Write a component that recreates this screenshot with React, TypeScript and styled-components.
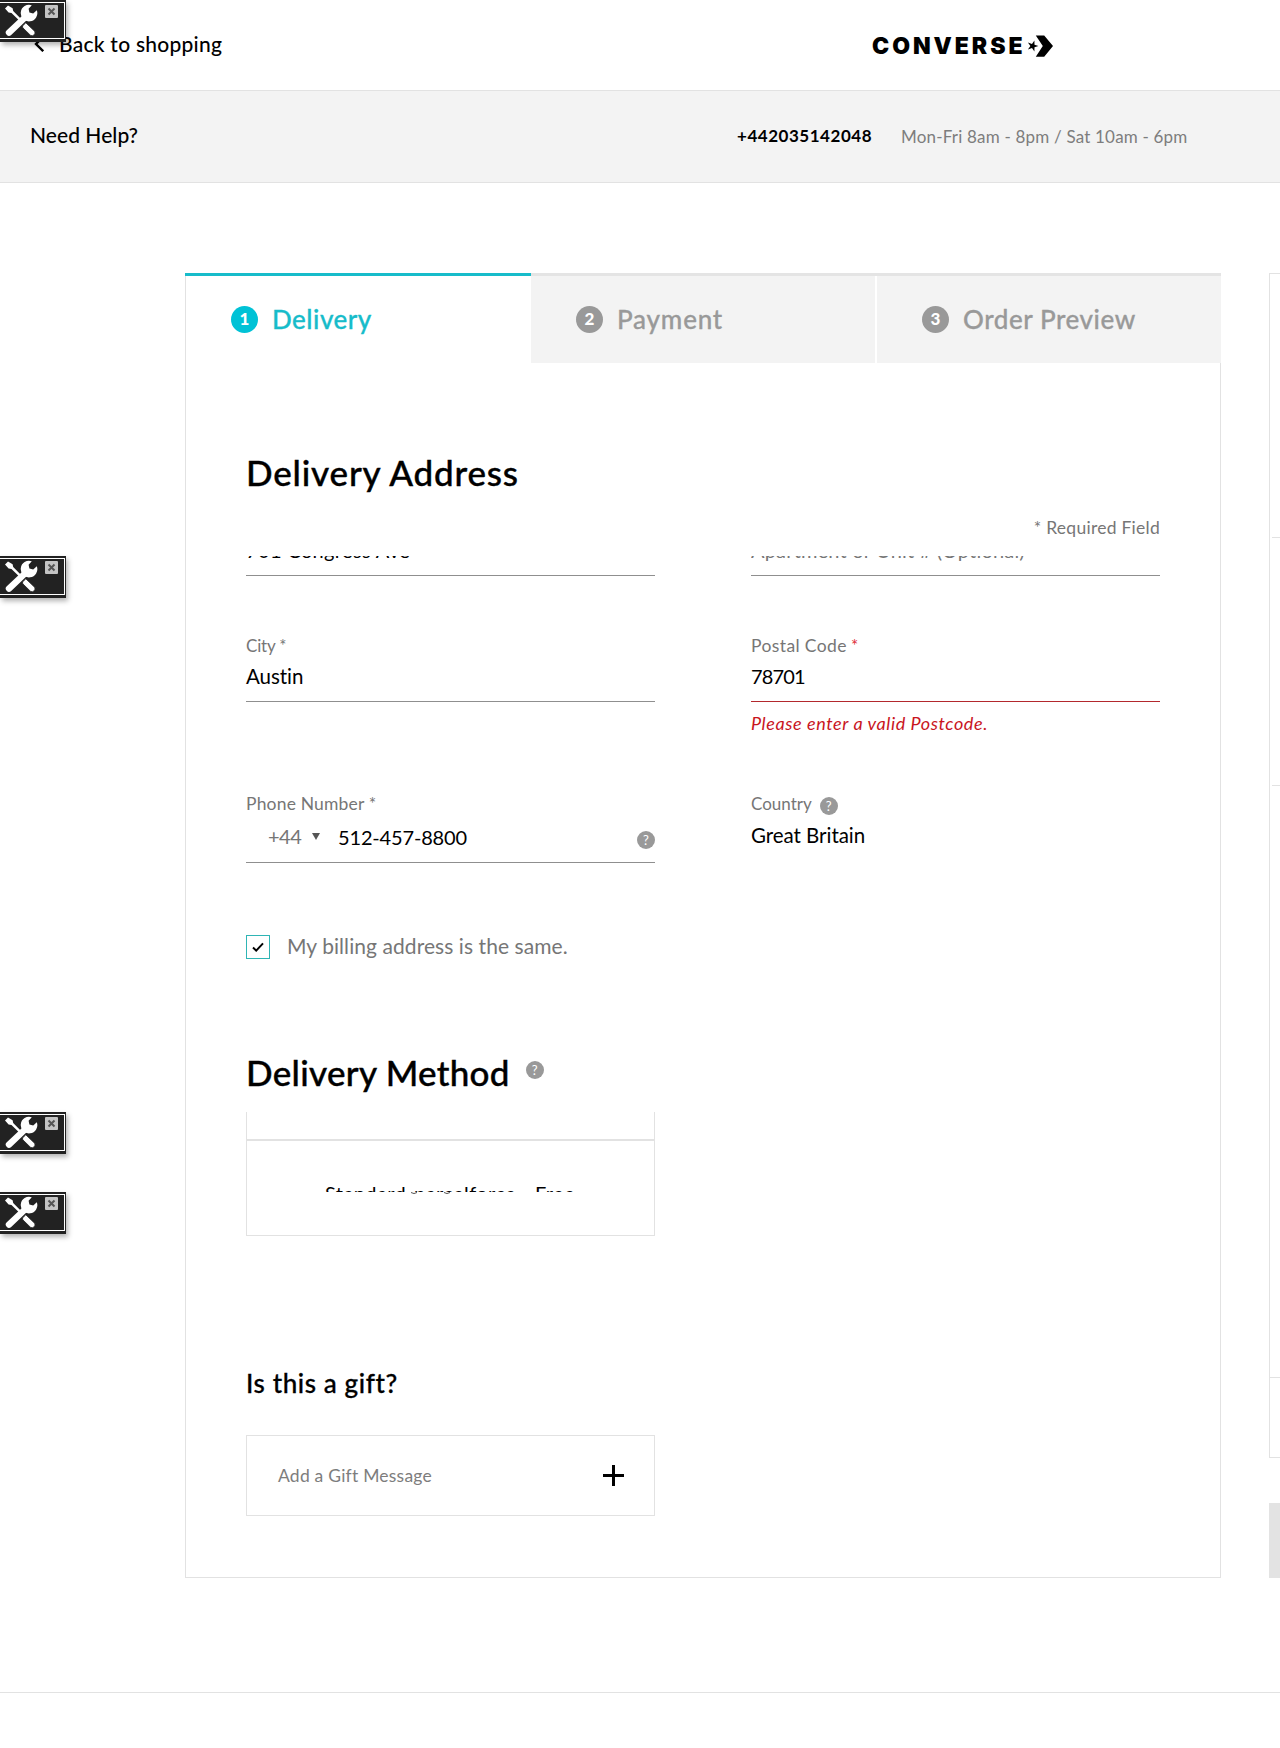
import React from "react";
import styled, { createGlobalStyle, css } from "styled-components";

const teal = "#17bcca";
const line = "#e2e2e2";
const grey = "#767676";

const GlobalStyle = createGlobalStyle`
  *, *::before, *::after { box-sizing: border-box; }
  body {
    margin: 0;
    background: #fff;
    color: #000;
    font-family: Lato, "Liberation Sans", sans-serif;
  }
`;

/* ---------- text ---------- */

const Text = styled.span<{ $ls?: number; $color?: string }>`
  display: block;
  white-space: nowrap;
  letter-spacing: ${(p) => p.$ls ?? 0}px;
  color: ${(p) => p.$color ?? "inherit"};
`;
const Small = styled(Text)<{ $size?: number }>`
  font-size: ${(p) => p.$size ?? 17}px;
  line-height: 21px;
`;
const Medium = styled(Text)<{ $size?: number }>`
  font-size: ${(p) => p.$size ?? 20}px;
  line-height: 24px;
`;
const Strong = styled(Medium)`
  font-weight: 500;
`;
const PhoneNumber = styled(Small)`
  font-weight: 700;
  margin-top: 2px;
`;
const Hours = styled(Small)`
  margin-top: 3px;
`;
const Title = styled.h2<{ $ls: number }>`
  margin: 0;
  font-size: 35px;
  line-height: 41px;
  font-weight: 500;
  white-space: nowrap;
  letter-spacing: ${(p) => p.$ls}px;
  -webkit-text-stroke: 0.4px currentColor;
`;
const SubTitle = styled.h3`
  margin: 131px 0 36px;
  font-size: 26px;
  line-height: 32px;
  font-weight: 500;
  letter-spacing: 0.6px;
  -webkit-text-stroke: 0.3px currentColor;
`;

/* ---------- page frame ---------- */

const Page = styled.div`
  position: relative;
  width: 1280px;
  height: 1748px;
  overflow: hidden;
`;
const Header = styled.header`
  display: grid;
  grid-template-columns: 842px auto;
  align-items: start;
  height: 91px;
  padding: 32px 0 0 30px;
  border-bottom: 1px solid ${line};
`;
const BackLink = styled.a`
  display: flex;
  align-items: center;
  gap: 15px;
  padding-left: 4px;
`;
const Logo = styled.div`
  display: flex;
  align-items: center;
  gap: 2px;
  padding-top: 3px;
`;
const LogoWord = styled.span`
  font: 900 23px/22px Inter, sans-serif;
  letter-spacing: 2.95px;
`;
const HelpBar = styled.section`
  display: flex;
  align-items: flex-start;
  height: 92px;
  padding: 32px 0 0 30px;
  background: #f3f3f3;
  border-bottom: 1px solid ${line};
`;
const HelpTitle = styled(Strong)`
  width: 707px;
`;
const Contact = styled.div`
  display: flex;
  gap: 29px;
`;
const Main = styled.main`
  display: flex;
  align-items: flex-start;
  gap: 48px;
  padding: 90px 0 114px 185px;
`;
const Footer = styled.footer`
  height: 56px;
  border-top: 1px solid ${line};
`;

/* ---------- checkout card ---------- */

const Card = styled.div`
  flex: none;
  width: 1036px;
`;
const Steps = styled.nav`
  display: grid;
  grid-template-columns: 346px 344px 2px 344px;
`;
const StepTab = styled.div<{ $active?: boolean }>`
  display: flex;
  align-items: center;
  gap: 14px;
  height: 90px;
  padding: 0 0 1px 45px;
  border-top: 3px solid #e4e4e4;
  background: #f3f3f3;
  color: #999;
  ${(p) =>
    p.$active &&
    css`
      border-top-color: ${teal};
      background: linear-gradient(${line}, ${line}) left / 1px 100% no-repeat #fff;
      color: ${teal};
      padding-left: 46px;
    `}
`;
const StepGap = styled.div`
  border-top: 3px solid #e4e4e4;
`;
const StepNumber = styled.span<{ $active?: boolean }>`
  width: 27px;
  height: 27px;
  border-radius: 50%;
  background: ${(p) => (p.$active ? "#00c2d6" : "#999")};
  color: #fff;
  font-size: 17px;
  font-weight: 900;
  line-height: 26px;
  text-align: center;
`;
const StepName = styled.span<{ $ls: number }>`
  font-size: 26px;
  line-height: 32px;
  font-weight: 500;
  white-space: nowrap;
  letter-spacing: ${(p) => p.$ls}px;
  -webkit-text-stroke: 0.3px currentColor;
`;
const Form = styled.form`
  display: flex;
  flex-direction: column;
  padding: 89px 60px 61px;
  border: 1px solid ${line};
  border-top: 0;
`;
const RequiredNote = styled(Small)`
  align-self: flex-end;
  margin: 24px 0 18px;
`;
const Row = styled.div<{ $top?: number }>`
  display: grid;
  grid-template-columns: 409px 409px;
  column-gap: 96px;
  align-items: start;
  margin-top: ${(p) => p.$top ?? 0}px;
`;
const Field = styled.div<{ $gap?: number }>`
  display: flex;
  flex-direction: column;
  gap: ${(p) => p.$gap ?? 8}px;
`;
const Label = styled.div`
  display: flex;
  align-items: center;
  gap: 4px;
  height: 21px;
`;
const Underlined = styled.div<{ $error?: boolean }>`
  display: flex;
  height: 38px;
  border-bottom: 1px solid ${(p) => (p.$error ? "#b3282d" : "#8f8f8f")};
`;
const CutOff = styled.div`
  display: flex;
  align-items: flex-end;
  height: 20px;
  padding-bottom: 13px;
  overflow: hidden;
  border-bottom: 1px solid #8f8f8f;
`;
const ErrorText = styled(Small)`
  margin-top: 3px;
  font-style: italic;
`;
const CountryCode = styled.div`
  display: flex;
  align-items: center;
  gap: 11px;
  width: 92px;
  height: 24px;
  margin-top: -1px;
  padding-left: 22px;
`;
const Triangle = styled.i`
  border: 4.5px solid transparent;
  border-top: 7px solid #555;
  border-bottom: 0;
`;
const HelpDot = styled.span`
  display: block;
  flex: none;
  width: 18px;
  height: 18px;
  border-radius: 50%;
  background: #999;
  color: #fff;
  font-size: 13px;
  line-height: 18px;
  text-align: center;
`;
const PhoneHelp = styled(HelpDot)`
  margin: 6px 0 0 auto;
`;
const CountryHelp = styled(HelpDot)`
  margin: 5px 0 0 4px;
`;
const TitleHelp = styled(HelpDot)`
  margin-top: 9px;
`;
const CheckRow = styled.label`
  display: flex;
  gap: 17px;
  height: 24px;
  margin: 72px 0 93px;
`;
const CheckBox = styled.span`
  display: grid;
  place-items: center;
  width: 24px;
  height: 24px;
  border: 1px solid #2fb5b5;
`;
const CheckLabel = styled(Medium)`
  margin-top: -1px;
`;
const TitleRow = styled.div`
  display: flex;
  gap: 16px;
  align-items: flex-start;
  margin-bottom: 19px;
`;
const MethodBox = styled.div`
  width: 409px;
  height: 124px;
  border: 1px solid ${line};
  border-top: 0;
`;
const MethodHead = styled.div`
  height: 29px;
  border-bottom: 2px solid ${line};
`;
const MethodName = styled.div`
  height: 51px;
  padding: 40px 0 0 78px;
  overflow: hidden;
`;
const Specks = styled.svg`
  display: block;
  margin-left: 163px;
`;
const GiftBox = styled.div`
  display: flex;
  align-items: center;
  justify-content: space-between;
  width: 409px;
  height: 81px;
  padding: 0 30px 0 31px;
  border: 1px solid ${line};
`;

/* ---------- order summary column ---------- */

const Aside = styled.aside`
  flex: none;
  width: 400px;
`;
const Summary = styled.div`
  height: 1185px;
  margin-bottom: 45px;
  border: 1px solid ${line};
`;
const SummaryPart = styled.div<{ $h: number; $inset?: number }>`
  height: ${(p) => p.$h}px;
  margin-left: ${(p) => p.$inset ?? 0}px;
  border-bottom: 1px solid ${line};
`;
const ContinueButton = styled.div`
  height: 75px;
  background: #e3e3e3;
`;

/* ---------- floating tool badge ---------- */

const Badge = styled.div<{ $y: number }>`
  position: absolute;
  left: 0;
  top: ${(p) => p.$y}px;
  width: 66px;
  height: 42px;
  padding: 2px 1px 3px 0;
  background: #222;
  box-shadow: 2px 3px 5px rgba(0, 0, 0, 0.3);
`;
const BadgeFrame = styled.div`
  display: flex;
  align-items: flex-start;
  height: 37px;
  border: 1px solid #fff;
  border-left: 0;
`;
const BadgeClose = styled.span`
  display: grid;
  place-items: center;
  width: 13px;
  height: 13px;
  margin: 2px 0 0 5px;
  border-radius: 1px;
  background: #c4c4c4;
`;

function ToolBadge({ y }: { y: number }) {
  return (
    <Badge $y={y}>
      <BadgeFrame>
        <svg width="40" height="35" viewBox="0 3 40 35">
          <path d="M5 8.5 8 5.5 12.6 8.2 13.2 11 22.6 20.6 21 22.2 11.5 13 8.6 12.6Z" fill="#fff" />
          <path d="M26 16.5 9 32.6" stroke="#fff" strokeWidth="6.4" strokeLinecap="round" />
          <path
            d="M31.8 5.3A8.3 8.3 0 1 0 36.8 10.2L33.2 13.4 29.4 12.6 28.6 8.7Z"
            fill="#fff"
          />
          <path
            d="M22.5 26 25.8 22.8 34.6 31.2Q35.8 33.2 34.2 34.8 32.4 36.6 30.4 35.2L22.8 27.8Z"
            fill="#fff"
            stroke="#222"
            strokeWidth="0.8"
          />
        </svg>
        <BadgeClose>
          <svg width="9" height="9" viewBox="0 0 9 9">
            <path d="M1.5 1.5 7.5 7.5M7.5 1.5 1.5 7.5" stroke="#555" strokeWidth="2" />
          </svg>
        </BadgeClose>
      </BadgeFrame>
    </Badge>
  );
}

export default function App() {
  return (
    <Page>
      <GlobalStyle />
      <Header>
        <BackLink>
          <svg width="10" height="16" viewBox="0 0 10 16">
            <path d="M9.2 .8 2 8 9.2 15.2" fill="none" stroke="#000" strokeWidth="2.4" />
          </svg>
          <Strong $size={21} $ls={0.25}>Back to shopping</Strong>
        </BackLink>
        <Logo>
          <LogoWord>CONVERSE</LogoWord>
          <svg width="27" height="22" viewBox="0 0 27 22">
            <path d="M11.4 11 7.5 12.3 7.4 16.5 5 13.1 .9 14.4 3.4 11 .9 7.6 5 8.9 7.4 5.5 7.5 9.7Z" />
            <path d="M8.8.4H17.2L26 11 17.2 21.8H8.8L15.8 11Z" />
          </svg>
        </Logo>
      </Header>
      <HelpBar>
        <HelpTitle $size={21} $ls={0.05}>Need Help?</HelpTitle>
        <Contact>
          <PhoneNumber $ls={0.53}>+442035142048</PhoneNumber>
          <Hours $ls={0.19} $color="#7d7d7d">Mon-Fri 8am - 8pm / Sat 10am - 6pm</Hours>
        </Contact>
      </HelpBar>

      <Main>
        <Card>
          <Steps>
            <StepTab $active>
              <StepNumber $active>1</StepNumber>
              <StepName $ls={0.5}>Delivery</StepName>
            </StepTab>
            <StepTab>
              <StepNumber>2</StepNumber>
              <StepName $ls={0.8}>Payment</StepName>
            </StepTab>
            <StepGap />
            <StepTab>
              <StepNumber>3</StepNumber>
              <StepName $ls={0.55}>Order Preview</StepName>
            </StepTab>
          </Steps>

          <Form>
            <Title $ls={0.82}>Delivery Address</Title>
            <RequiredNote $size={17.5} $ls={0.26} $color={grey}>* Required Field</RequiredNote>

            <Row>
              <CutOff>
                <Medium $ls={0.36}>701 Congress Ave</Medium>
              </CutOff>
              <CutOff>
                <Medium $ls={0.18} $color={grey}>Apartment or Unit # (Optional)</Medium>
              </CutOff>
            </Row>

            <Row $top={59}>
              <Field>
                <Label>
                  <Small $ls={-0.2} $color={grey}>City *</Small>
                </Label>
                <Underlined>
                  <Medium $size={20.5} $ls={-0.05}>Austin</Medium>
                </Underlined>
              </Field>
              <Field>
                <Label>
                  <Small $size={17.5} $ls={0.39} $color={grey}>Postal Code</Small>
                  <Small $color="#e0303a">*</Small>
                </Label>
                <Underlined $error>
                  <Medium $ls={-0.85}>78701</Medium>
                </Underlined>
                <ErrorText $size={18} $ls={0.59} $color="#c9151e">Please enter a valid Postcode.</ErrorText>
              </Field>
            </Row>

            <Row $top={59}>
              <Field $gap={11}>
                <Label>
                  <Small $size={17.5} $ls={0.18} $color={grey}>Phone Number *</Small>
                </Label>
                <Underlined>
                  <CountryCode>
                    <Medium $ls={-0.5} $color={grey}>+44</Medium>
                    <Triangle />
                  </CountryCode>
                  <Medium $ls={-0.16}>512-457-8800</Medium>
                  <PhoneHelp>?</PhoneHelp>
                </Underlined>
              </Field>
              <Field $gap={9}>
                <Label>
                  <Small $color={grey}>Country</Small>
                  <CountryHelp>?</CountryHelp>
                </Label>
                <Medium $size={20.5} $ls={-0.04}>Great Britain</Medium>
              </Field>
            </Row>

            <CheckRow>
              <CheckBox>
                <svg width="12" height="10" viewBox="0 0 12 10">
                  <path d="M1 5.6 4.2 8.6 11 1.4" fill="none" stroke="#000" strokeWidth="2" />
                </svg>
              </CheckBox>
              <CheckLabel $size={21} $ls={0.07} $color={grey}>My billing address is the same.</CheckLabel>
            </CheckRow>

            <TitleRow>
              <Title $ls={0.3}>Delivery Method</Title>
              <TitleHelp>?</TitleHelp>
            </TitleRow>
            <MethodBox>
              <MethodHead />
              <MethodName>
                <Medium $ls={0.41}>Standard-parcelforce - Free</Medium>
              </MethodName>
              <Specks width="42" height="3" viewBox="0 0 42 3">
                <path d="M1 .5Q4 2.6 7 .5M34 .5Q37 2.6 40 .5" fill="none" stroke="#555" strokeWidth="1" />
              </Specks>
            </MethodBox>

            <SubTitle>Is this a gift?</SubTitle>
            <GiftBox>
              <Small $size={17.5} $ls={0.22} $color="#7d7d7d">Add a Gift Message</Small>
              <svg width="21" height="21" viewBox="0 0 21 21">
                <path d="M0 10.5H21M10.5 0V21" stroke="#000" strokeWidth="3" />
              </svg>
            </GiftBox>
          </Form>
        </Card>

        <Aside>
          <Summary>
            <SummaryPart $h={264} $inset={2} />
            <SummaryPart $h={248} $inset={2} />
            <SummaryPart $h={592} />
          </Summary>
          <ContinueButton />
        </Aside>
      </Main>
      <Footer />

      <ToolBadge y={0} />
      <ToolBadge y={556} />
      <ToolBadge y={1112} />
      <ToolBadge y={1192} />
    </Page>
  );
}
